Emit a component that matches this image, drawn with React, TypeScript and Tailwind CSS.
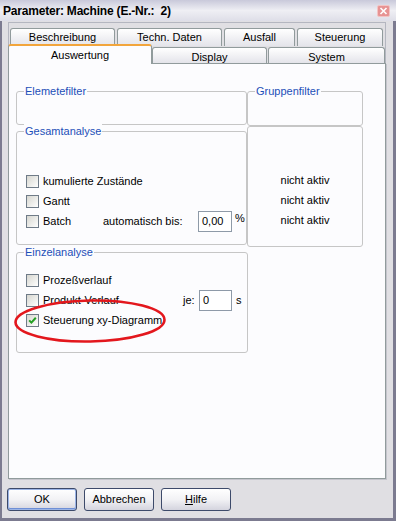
const TabBack = ({ label, w }: { label: string; w: string }) => (
  <div
    className={`flex h-[18px] ${w} items-center justify-center rounded-t-[3px] border border-b-0 border-[#919b9c] bg-linear-to-b from-white to-[#e4e4ea] pb-[1px]`}
  >
    {label}
  </div>
);

const TabFront = ({ label, w, className = "" }: { label: string; w: string; className?: string }) => (
  <div
    className={`flex h-[16px] ${w} items-center justify-center rounded-t-[3px] border border-b-0 border-[#919b9c] bg-linear-to-b from-white to-[#e4e4ea] pt-[3px] ${className}`}
  >
    {label}
  </div>
);

function Check({ checked }: { checked?: boolean }) {
  return (
    <span className="flex h-[13px] w-[13px] shrink-0 items-center justify-center border border-[#6f7b88] bg-linear-to-br from-[#d6d6d0] to-white">
      {checked && (
        <svg width="11" height="11" viewBox="0 0 11 11">
          <path d="M2.2 5.4 L4.4 7.6 L8.8 2.8" fill="none" stroke="#22a022" strokeWidth="2" />
        </svg>
      )}
    </span>
  );
}

function Group({ label, className = "", children }: { label?: string; className?: string; children?: React.ReactNode }) {
  return (
    <div className={`relative rounded-[3px] border border-[#c6c6c6] ${className}`}>
      {label && (
        <span className="absolute -top-[8px] left-[7px] bg-[#fcfcfe] px-[1px] leading-[14px] text-[#1d4fb8]">
          {label}
        </span>
      )}
      {children}
    </div>
  );
}

function Field({ value, w }: { value: string; w: string }) {
  return (
    <span className={`flex h-[21px] ${w} items-center border border-[#8e9aa8] bg-white pl-[3px]`}>{value}</span>
  );
}

function Btn({ children, primary }: { children: React.ReactNode; primary?: boolean }) {
  return (
    <button
      type="button"
      className={`flex h-[23px] w-[70px] items-center justify-center rounded-[3px] border border-[#3d4a6a] bg-linear-to-b from-white via-[#f2f2f5] to-[#d4d4de] ${
        primary ? "shadow-[inset_0_0_0_1px_#9bb4e6,inset_0_-1px_0_1px_#6e8fd6]" : ""
      }`}
    >
      {children}
    </button>
  );
}

export default function App() {
  return (
    <div className="relative flex h-[521px] w-[396px] flex-col bg-[#e0dfe3] text-[11px] text-black [font-family:'Liberation_Sans',Arial,sans-serif]">
      {/* title bar */}
      <div className="flex h-[21px] shrink-0 items-center justify-between bg-linear-to-b from-[#c9c9da] via-[#efeff4] to-[#dedee8] pl-[3px] pr-[6px]">
        <span className="text-[12px] font-bold tracking-[-0.2px]">Parameter: Machine (E.-Nr.:&nbsp; 2)</span>
        <span className="flex h-[12px] w-[13px] items-center justify-center rounded-[2px] border border-[#f3c4c4] bg-[#e79393]">
          <svg width="9" height="8" viewBox="0 0 9 8">
            <path d="M1.5 1 L7.5 7 M7.5 1 L1.5 7" stroke="white" strokeWidth="1.6" />
          </svg>
        </span>
      </div>

      <div className="flex flex-1 flex-col border-b-[3px] border-l-2 border-r-[3px] border-[#7c7b90] pl-[6px]">
        {/* tab control */}
        <div className="mt-[1px] w-[378px] border-x border-t border-[#b4b6c0] pt-[5px]">
          <div className="ml-[1px] flex gap-[2px]">
            <TabBack label="Beschreibung" w="w-[105px]" />
            <TabBack label="Techn. Daten" w="w-[105px]" />
            <TabBack label="Ausfall" w="w-[71px]" />
            <TabBack label="Steuerung" w="w-[86px]" />
          </div>
          <div className="relative z-10 -mt-[2px] -ml-[1px] flex h-[19px] items-end">
            <div className="mb-[-1px] flex h-[20px] w-[144px] items-start justify-center rounded-t-[3px] border border-b-0 border-[#919b9c] border-t-2 border-t-[#f2a53c] bg-[#fcfcfe] pt-[1px]">
              Auswertung
            </div>
            <TabFront label="Display" w="w-[115px]" />
            <TabFront label="System" w="w-[117px]" className="ml-[1px]" />
          </div>
          <div className="-mx-[1px] h-[416px] border border-[#919b9c] bg-[#fcfcfe] pl-[7px] pt-[27px] shadow-[1px_1px_0_#c4c4cc]">
            <div className="flex">
              <div className="flex w-[231px] flex-col">
                <Group label="Elemetefilter" className="h-[34px]" />
                <Group label="Gesamtanalyse" className="mt-[6px] h-[114px] pl-[9px] pt-[39px]">
                  <div className="flex h-[20px] items-center">
                    <Check />
                    <span className="ml-[4px]">kumulierte Zustände</span>
                  </div>
                  <div className="flex h-[20px] items-center">
                    <Check />
                    <span className="ml-[4px]">Gantt</span>
                  </div>
                  <div className="flex h-[20px] items-center">
                    <Check />
                    <span className="ml-[4px] w-[60px]">Batch</span>
                    <span className="w-[95px]">automatisch bis:</span>
                    <Field value="0,00" w="w-[34px]" />
                    <span className="ml-[3px] -mt-[6px]">%</span>
                  </div>
                </Group>
                <Group label="Einzelanalyse" className="mt-[7px] h-[101px] w-[232px] pl-[9px] pt-[17px]">
                  <div className="flex h-[20px] items-center">
                    <Check />
                    <span className="ml-[4px]">Prozeßverlauf</span>
                  </div>
                  <div className="flex h-[20px] items-center">
                    <Check />
                    <span className="ml-[4px] w-[140px]">Produkt-Verlauf</span>
                    <span className="w-[16px]">je:</span>
                    <Field value="0" w="w-[33px]" />
                    <span className="ml-[4px]">s</span>
                  </div>
                  <div className="flex h-[20px] items-center">
                    <Check checked />
                    <span className="ml-[4px]">Steuerung xy-Diagramm</span>
                  </div>
                </Group>
              </div>
              <div className="flex w-[116px] flex-col">
                <Group label="Gruppenfilter" className="h-[35px]" />
                <Group className="h-[121px] pt-[43px] text-center leading-[20px]">
                  <div>nicht aktiv</div>
                  <div>nicht aktiv</div>
                  <div>nicht aktiv</div>
                </Group>
              </div>
            </div>
          </div>
        </div>

        {/* buttons */}
        <div className="mt-[9px] flex gap-[7px] pl-[-1px] -ml-[1px]">
          <Btn primary>OK</Btn>
          <Btn>Abbrechen</Btn>
          <Btn>
            <span>
              <span className="underline">H</span>ilfe
            </span>
          </Btn>
        </div>
      </div>

      {/* red annotation ellipse */}
      <svg className="pointer-events-none absolute left-[13px] top-[298px]" width="154" height="46" viewBox="0 0 154 46">
        <ellipse cx="77" cy="23" rx="74.5" ry="20.5" fill="none" stroke="#e3171d" strokeWidth="2.6" transform="rotate(-1 77 23)" />
      </svg>
    </div>
  );
}
